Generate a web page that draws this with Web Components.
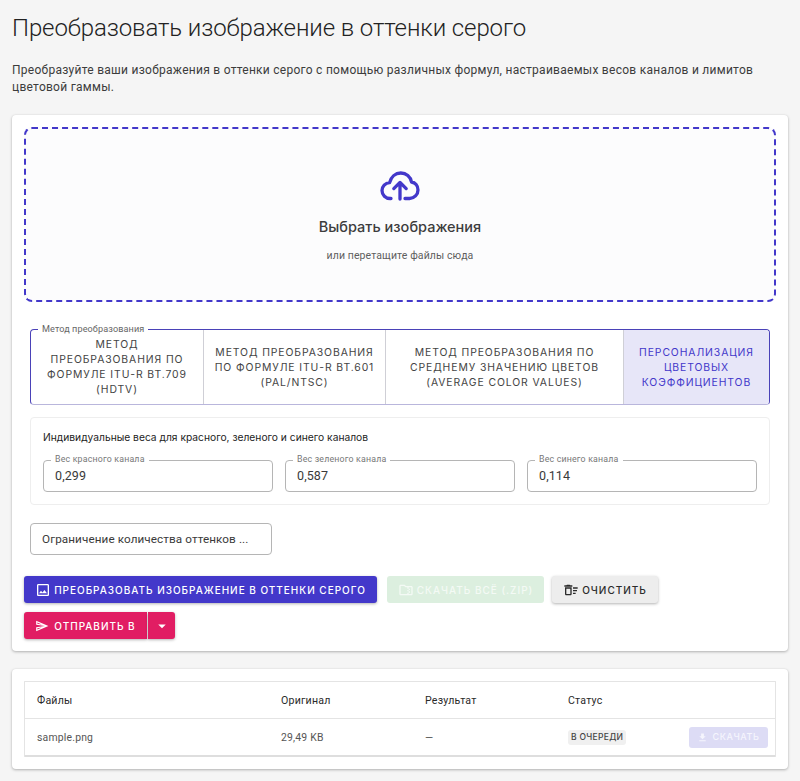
<!DOCTYPE html>
<html lang="ru">
<head>
<meta charset="utf-8">
<title>Оттенки серого</title>
<style>
  html, body { margin: 0; background: #f5f5f5; }
  body { font-family: "Inter", "Noto Sans", sans-serif; color: #222; }
</style>
</head>
<body>
<gs-page>
  <gs-card>
    <gs-dropzone></gs-dropzone>
    <gs-methods></gs-methods>
    <gs-weights></gs-weights>
    <gs-limit></gs-limit>
    <gs-actions></gs-actions>
  </gs-card>
  <gs-card>
    <gs-files></gs-files>
  </gs-card>
</gs-page>

<script>
const ICONS = {
  image: "M19 5v14H5V5h14m0-2H5c-1.1 0-2 .9-2 2v14c0 1.1.9 2 2 2h14c1.1 0 2-.9 2-2V5c0-1.1-.9-2-2-2zm-4.86 8.86l-3 3.87L9 13.14 6 17h12l-3.86-5.14z",
  zip: "M20 6h-8l-2-2H4c-1.1 0-2 .9-2 2v12c0 1.1.9 2 2 2h16c1.1 0 2-.9 2-2V8c0-1.1-.9-2-2-2zm-4 10h2v-2h-2v-2h2v-2h-2V8h4v10h-4v-2zm0 0h-2v2H4V6h5.17l2 2H14v2h2v2h-2v2h2v2z",
  sweep: "M15 16h4v2h-4v-2zm0-8h7v2h-7V8zm0 4h6v2h-6v-2zM3 18c0 1.1.9 2 2 2h6c1.1 0 2-.9 2-2V8H3v10zm2-8h6v8H5v-8zm5-6H6L5 5H2v2h12V5h-3z",
  send: "M4.01 6.03l7.51 3.22-7.52-1 .01-2.22m7.5 8.72L4 17.97v-2.22l7.51-1M2.01 3L2 10l15 2-15 2 .01 7L23 12 2.01 3z",
  download: "M5 20h14v-2H5v2zM19 9h-4V3H9v6H5l7 7 7-7z",
  caret: "M7 10l5 5 5-5z",
};

const icon = (name, size) =>
  `<svg width="${size}" height="${size}" viewBox="0 0 24 24" fill="currentColor" aria-hidden="true"><path d="${ICONS[name]}"/></svg>`;

class GsPage extends HTMLElement {
  connectedCallback() {
    this.attachShadow({ mode: "open" }).innerHTML = `
      <style>
        :host { display: block; padding: 0 12px 12px; }
        h1 { margin: 0; padding-top: 13px; font: 300 24px/30px Roboto, sans-serif; letter-spacing: -.1px; color: #222; }
        p { margin: 0; padding-top: 19px; font: 400 12px/17px Roboto, sans-serif; letter-spacing: .27px; color: #3c3c3c; }
        .cards { display: flex; flex-direction: column; gap: 18px; margin-top: 19px; }
      </style>
      <h1>Преобразовать изображение в оттенки серого</h1>
      <p>Преобразуйте ваши изображения в оттенки серого с помощью различных формул, настраиваемых весов каналов и лимитов цветовой гаммы.</p>
      <div class="cards"><slot></slot></div>
    `;
  }
}

class GsCard extends HTMLElement {
  connectedCallback() {
    this.attachShadow({ mode: "open" }).innerHTML = `
      <style>
        :host {
          display: block;
          padding: 12px;
          background: #fff;
          border-radius: 4px;
          box-shadow: 0 1px 3px rgba(0,0,0,.28), 0 0 2px rgba(0,0,0,.06);
        }
      </style>
      <slot></slot>
    `;
  }
}

class GsDropzone extends HTMLElement {
  connectedCallback() {
    this.attachShadow({ mode: "open" }).innerHTML = `
      <style>
        :host {
          display: flex; flex-direction: column; align-items: center;
          box-sizing: border-box; height: 175px; padding-top: 42px;
          border: 2px dashed #4338ca; border-radius: 8px;
          background: #fcfcfd;
        }
        svg { display: block; color: #4338ca; }
        .title { margin-top: 16px; font: 500 14.5px/20px Inter, sans-serif; color: #3d3d3d; }
        .sub { margin-top: 11px; font: 400 10.5px/16px Roboto, sans-serif; letter-spacing: .1px; color: #5e5e5e; }
      </style>
      <svg width="40" height="30" viewBox="0 0 40 30" fill="none" stroke="currentColor" stroke-width="3.3" stroke-linecap="round" stroke-linejoin="round">
        <path d="M11 27.5H10.2C5.6 27.5 2 24 2 19.6c0-4.3 3.3-7.7 7.6-8C11 6 15.4 2 20.8 2c5.4 0 9.8 3.8 10.7 9 3.7.6 6.5 3.9 6.5 7.9 0 4.7-3.8 8.6-8.4 8.6H25"/>
        <path d="M20 28V12M13.8 17.6 20 11.4l6.2 6.2"/>
      </svg>
      <div class="title">Выбрать изображения</div>
      <div class="sub">или перетащите файлы сюда</div>
    `;
  }
}

class GsMethods extends HTMLElement {
  connectedCallback() {
    const items = [
      ["Метод преобразования по формуле ITU-R BT.709 (HDTV)", 173, 12],
      ["Метод преобразования по формуле ITU-R BT.601 (PAL/NTSC)", 182, 6],
      ["Метод преобразования по среднему значению цветов (Average Color Values)", 238, 12],
      ["Персонализация цветовых коэффициентов", 0, 10, true],
    ];
    const cells = items.map(([text, w, pad, on]) =>
      `<div class="opt${on ? " on" : ""}" style="${w ? `flex:0 0 ${w}px` : "flex:1"};padding:0 ${pad}px"><span>${text}</span></div>`).join("");
    this.attachShadow({ mode: "open" }).innerHTML = `
      <style>
        :host { display: block; position: relative; margin: 27px 6px 0; }
        .group {
          display: flex; box-sizing: border-box; height: 76px; overflow: hidden;
          border: 1px solid #4a42b8; border-bottom-color: #b9b6dc; border-radius: 4px;
        }
        .opt {
          box-sizing: border-box; display: flex; align-items: center; justify-content: center;
          text-align: center; text-transform: uppercase;
          font: 400 10.4px/15px Inter, sans-serif; letter-spacing: .9px; color: #444;
          border-right: 1px solid #cfcfd6;
        }
        .opt:last-child { border-right: 0; }
        .opt.on { background: #e7e6f8; color: #4338ca; }
        .legend {
          position: absolute; left: 8px; top: -6px; padding: 0 4px; background: #fff;
          font: 400 9.1px/12px Roboto, sans-serif; letter-spacing: .1px; color: #666;
        }
      </style>
      <div class="group">${cells}</div>
      <div class="legend">Метод преобразования</div>
    `;
  }
}

class GsField extends HTMLElement {
  connectedCallback() {
    const label = this.getAttribute("label");
    this.attachShadow({ mode: "open" }).innerHTML = `
      <style>
        :host { display: block; position: relative; flex: 1; min-width: 0; }
        .box {
          box-sizing: border-box; height: 32px; padding: 0 11px;
          display: flex; align-items: center; white-space: nowrap;
          border: 1px solid #b5b5b5; border-radius: 4px; background: #fff;
          font: 400 var(--field-size, 12.5px)/16px Roboto, sans-serif; letter-spacing: .1px; color: #3a3a3a;
        }
        .label {
          position: absolute; left: 8px; top: -6px; padding: 0 4px; background: #fff;
          font: 400 8.8px/11px Roboto, sans-serif; letter-spacing: .18px; color: #777;
        }
      </style>
      <div class="box"><slot></slot></div>
      ${label ? `<div class="label">${label}</div>` : ""}
    `;
  }
}

class GsWeights extends HTMLElement {
  connectedCallback() {
    this.attachShadow({ mode: "open" }).innerHTML = `
      <style>
        :host {
          display: block; box-sizing: border-box; height: 88px; margin: 12px 6px 0;
          padding: 12px 12px 0; border: 1px solid #eee; border-radius: 4px;
        }
        .title { font: 400 10.25px/14px Inter, sans-serif; color: #222; }
        .row { display: flex; gap: 12px; margin-top: 16px; }
      </style>
      <div class="title">Индивидуальные веса для красного, зеленого и синего каналов</div>
      <div class="row">
        <gs-field label="Вес красного канала">0,299</gs-field>
        <gs-field label="Вес зеленого канала">0,587</gs-field>
        <gs-field label="Вес синего канала">0,114</gs-field>
      </div>
    `;
  }
}

class GsLimit extends HTMLElement {
  connectedCallback() {
    this.attachShadow({ mode: "open" }).innerHTML = `
      <style>
        :host { display: block; width: 242px; margin: 18px 0 0 6px; --field-size: 11.7px; }
      </style>
      <gs-field>Ограничение количества оттенков ...</gs-field>
    `;
  }
}

class GsButton extends HTMLElement {
  connectedCallback() {
    const ic = this.getAttribute("icon");
    const size = this.getAttribute("icon-size") || 16;
    this.attachShadow({ mode: "open" }).innerHTML = `
      <style>
        :host {
          display: inline-flex; align-items: center; justify-content: center; gap: 3px;
          box-sizing: border-box; height: 27px; padding: 0 12px;
          border-radius: 3px;
          font: 500 10px/14px Inter, sans-serif; letter-spacing: .98px; text-transform: uppercase;
          background: var(--bg); color: var(--fg);
          box-shadow: var(--shadow, 0 1px 3px rgba(0,0,0,.3));
          white-space: nowrap;
        }
        svg { display: block; flex: none; }
      </style>
      ${ic ? icon(ic, size) : ""}<slot></slot>
    `;
  }
}

class GsActions extends HTMLElement {
  connectedCallback() {
    this.attachShadow({ mode: "open" }).innerHTML = `
      <style>
        :host { display: flex; flex-wrap: wrap; gap: 9px 8px; margin: 21px -6px 0 0; }
        .primary { --bg: #4338ca; --fg: #fff; width: 353px; margin-right: 2px; }
        .zip { --bg: #dcefdf; --fg: #f4faf5; --shadow: none; width: 157px; }
        .clear { --bg: #ededed; --fg: #2b2b2b; width: 106px; }
        .split { display: flex; gap: 1px; width: 100%; }
        .send { --bg: #e11d63; --fg: #fff; width: 123px; border-radius: 3px 0 0 3px; gap: 5px; }
        .more { --bg: #e11d63; --fg: #fff; width: 27px; padding: 0; border-radius: 0 3px 3px 0; }
      </style>
      <gs-button class="primary" icon="image">Преобразовать изображение в оттенки серого</gs-button>
      <gs-button class="zip" icon="zip">Скачать всё (.zip)</gs-button>
      <gs-button class="clear" icon="sweep">Очистить</gs-button>
      <div class="split">
        <gs-button class="send" icon="send" icon-size="14">Отправить в</gs-button>
        <gs-button class="more" icon="caret" icon-size="18"></gs-button>
      </div>
    `;
  }
}

class GsFiles extends HTMLElement {
  connectedCallback() {
    this.attachShadow({ mode: "open" }).innerHTML = `
      <style>
        :host {
          display: block; border: 1px solid #e4e4e4; border-bottom: 2px solid #dedede;
          border-radius: 1px; font-family: Roboto, sans-serif;
        }
        .row { display: grid; grid-template-columns: 244px 144px 143px 120px 1fr; align-items: center; box-sizing: border-box; padding-left: 12px; }
        .head { height: 37px; font-size: 10.6px; letter-spacing: .2px; color: #2a2a2a; border-bottom: 1px solid #e4e4e4; }
        .body { height: 36px; font-size: 10.4px; letter-spacing: .2px; color: #555; }
        .chip {
          justify-self: start; padding: 0 3px; height: 15px; border-radius: 3px; background: #f0f0f0;
          font: 500 8.5px/15px Inter, sans-serif; letter-spacing: .3px; color: #444;
        }
        .get {
          --bg: #dddcf5; --fg: #f5f5fd; --shadow: none;
          justify-self: end; width: 79px; height: 21px; margin-right: 7px; padding: 0;
          font-size: 9px; letter-spacing: .6px; gap: 4px;
        }
      </style>
      <div class="row head"><div>Файлы</div><div>Оригинал</div><div>Результат</div><div>Статус</div><div></div></div>
      <div class="row body">
        <div>sample.png</div><div>29,49 KB</div><div>—</div>
        <div class="chip">В ОЧЕРЕДИ</div>
        <gs-button class="get" icon="download" icon-size="11">Скачать</gs-button>
      </div>
    `;
  }
}

customElements.define("gs-page", GsPage);
customElements.define("gs-card", GsCard);
customElements.define("gs-dropzone", GsDropzone);
customElements.define("gs-methods", GsMethods);
customElements.define("gs-field", GsField);
customElements.define("gs-weights", GsWeights);
customElements.define("gs-limit", GsLimit);
customElements.define("gs-button", GsButton);
customElements.define("gs-actions", GsActions);
customElements.define("gs-files", GsFiles);
</script>
</body>
</html>
